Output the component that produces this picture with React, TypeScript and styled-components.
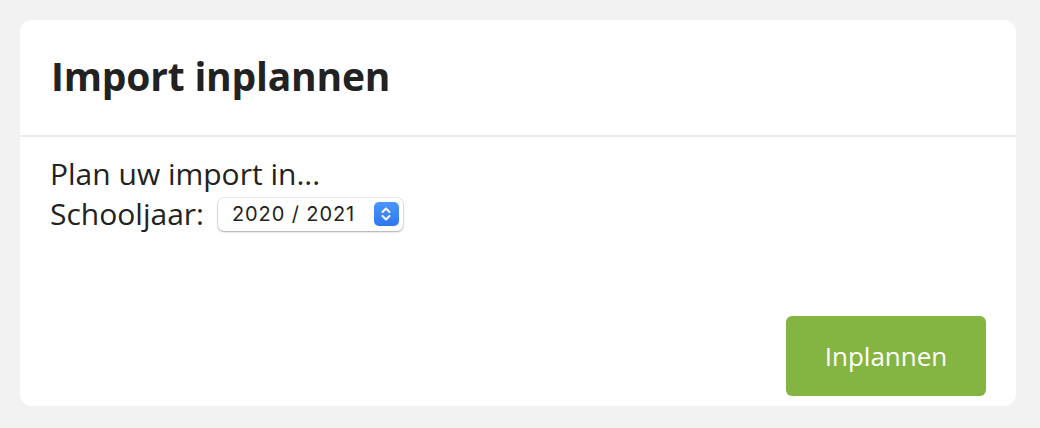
import React from 'react'
import styled, { createGlobalStyle } from 'styled-components'

const GlobalStyle = createGlobalStyle`
    html, body {
        margin: 0;
        padding: 0;
        background: #f2f2f2;
    }
    body {
        font-family: 'Open Sans', 'Noto Sans', sans-serif;
        color: #222;
    }
`

const Page = styled.div`
    padding: 20px 24px 22px 20px;
    box-sizing: border-box;
    width: 1040px;
    height: 428px;
`

const Card = styled.div`
    background: #fff;
    border-radius: 12px;
    height: 386px;
    display: flex;
    flex-direction: column;
`

const Header = styled.div`
    height: 117px;
    box-sizing: border-box;
    padding: 0 31px 4px;
    display: flex;
    align-items: center;
    border-bottom: 2px solid #ededed;
`

const Title = styled.h1`
    margin: 0;
    font-family: 'Open Sans', 'Noto Sans', sans-serif;
    font-weight: 700;
    font-size: 39px;
    letter-spacing: -0.2px;
    color: #222;
`

const Body = styled.div`
    flex: 1;
    padding: 17px 30px 10px 30px;
    display: flex;
    flex-direction: column;
`

const Line = styled.div`
    font-size: 30px;
    line-height: 40px;
    display: flex;
    align-items: center;
    gap: 14px;
`

const SelectBox = styled.div`
    display: inline-flex;
    align-items: center;
    height: 33px;
    width: 185px;
    box-sizing: border-box;
    padding: 0 4px 0 14px;
    border-radius: 6px;
    background: #fff;
    box-shadow: 0 0 0 1px rgba(0, 0, 0, 0.08), 0 1px 2px rgba(0, 0, 0, 0.28);
`

const Select = styled.select`
    appearance: none;
    -webkit-appearance: none;
    border: none;
    outline: none;
    background: transparent;
    flex: 1;
    padding: 0;
    font-family: 'Inter', 'Liberation Sans', sans-serif;
    font-size: 20px;
    letter-spacing: 0.9px;
    color: #222;
`

const Stepper = styled.span`
    width: 25px;
    height: 24px;
    border-radius: 5px;
    background: linear-gradient(#4b96ff, #2e77ee);
    display: flex;
    align-items: center;
    justify-content: center;
`

const Footer = styled.div`
    margin-top: auto;
    display: flex;
    justify-content: flex-end;
`

const Button = styled.button`
    width: 200px;
    height: 80px;
    border: none;
    border-radius: 6px;
    background: #84b441;
    color: #fff;
    font-family: 'Open Sans', sans-serif;
    font-size: 26px;
    cursor: pointer;
`

export default function App() {
    return (
        <>
            <GlobalStyle />
            <Page>
                <Card>
                    <Header>
                        <Title>Import inplannen</Title>
                    </Header>
                    <Body>
                        <Line>Plan uw import in...</Line>
                        <Line>
                            Schooljaar:
                            <SelectBox>
                                <Select defaultValue="2020">
                                    <option value="2020">2020 / 2021</option>
                                    <option value="2021">2021 / 2022</option>
                                </Select>
                                <Stepper>
                                    <svg width="12" height="18" viewBox="0 0 12 18" fill="none" stroke="#fff" strokeWidth="2" strokeLinecap="round" strokeLinejoin="round">
                                        <path d="M2.5 7 L6 3.5 L9.5 7" />
                                        <path d="M2.5 11 L6 14.5 L9.5 11" />
                                    </svg>
                                </Stepper>
                            </SelectBox>
                        </Line>
                        <Footer>
                            <Button>Inplannen</Button>
                        </Footer>
                    </Body>
                </Card>
            </Page>
        </>
    )
}
